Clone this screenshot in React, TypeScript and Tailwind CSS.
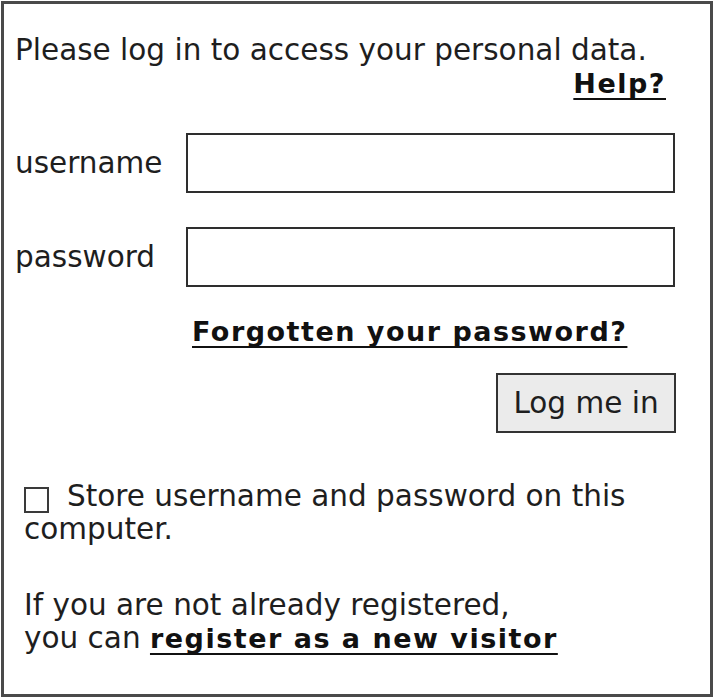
const linkClass =
  "text-[27px] font-bold tracking-[1.5px] text-[#111] underline decoration-2 underline-offset-[5px] [text-decoration-skip-ink:none]";

export default function App() {
  return (
    <div className="m-px box-border h-[696px] w-[712px] border-[3px] border-[#4a4a4a] bg-white pl-[11px] pr-[34px] pt-[30px] font-['DejaVu_Sans',sans-serif] text-[29.5px] leading-[33px] text-[#1e1e1e]">
      <p>Please log in to access your personal data.</p>
      <p className="pr-[10px] text-right">
        <a href="#" className={linkClass}>
          Help?
        </a>
      </p>

      <div className="mt-[33px] flex items-center">
        <label className="w-[171px]">username</label>
        <input type="text" className="h-[60px] w-[489px] border-[2.5px] border-[#2e2e2e] bg-white outline-none" />
      </div>
      <div className="mt-[34px] flex items-center">
        <label className="w-[171px]">password</label>
        <input type="password" className="h-[60px] w-[489px] border-[2.5px] border-[#2e2e2e] bg-white outline-none" />
      </div>

      <p className="mt-[28px] pl-[177px]">
        <a href="#" className={linkClass}>
          Forgotten your password?
        </a>
      </p>

      <div className="mt-[25px] flex justify-end">
        <button className="h-[60px] w-[180px] border-[2.5px] border-[#333] bg-[#ebebeb] text-[29.5px] text-[#1e1e1e]">
          Log me in
        </button>
      </div>

      <div className="ml-[9px]">
        <p className="mt-[47px]">
          <input
            type="checkbox"
            className="mr-[18px] inline-block h-[26px] w-[25px] appearance-none border-2 border-[#3a3a3a] bg-white align-[-7px]"
          />
          Store username and password on this computer.
        </p>
        <p className="mt-[43px]">
          If you are not already registered,
          <br />
          you can{" "}
          <a href="#" className={linkClass}>
            register as a new visitor
          </a>
        </p>
      </div>
    </div>
  );
}
